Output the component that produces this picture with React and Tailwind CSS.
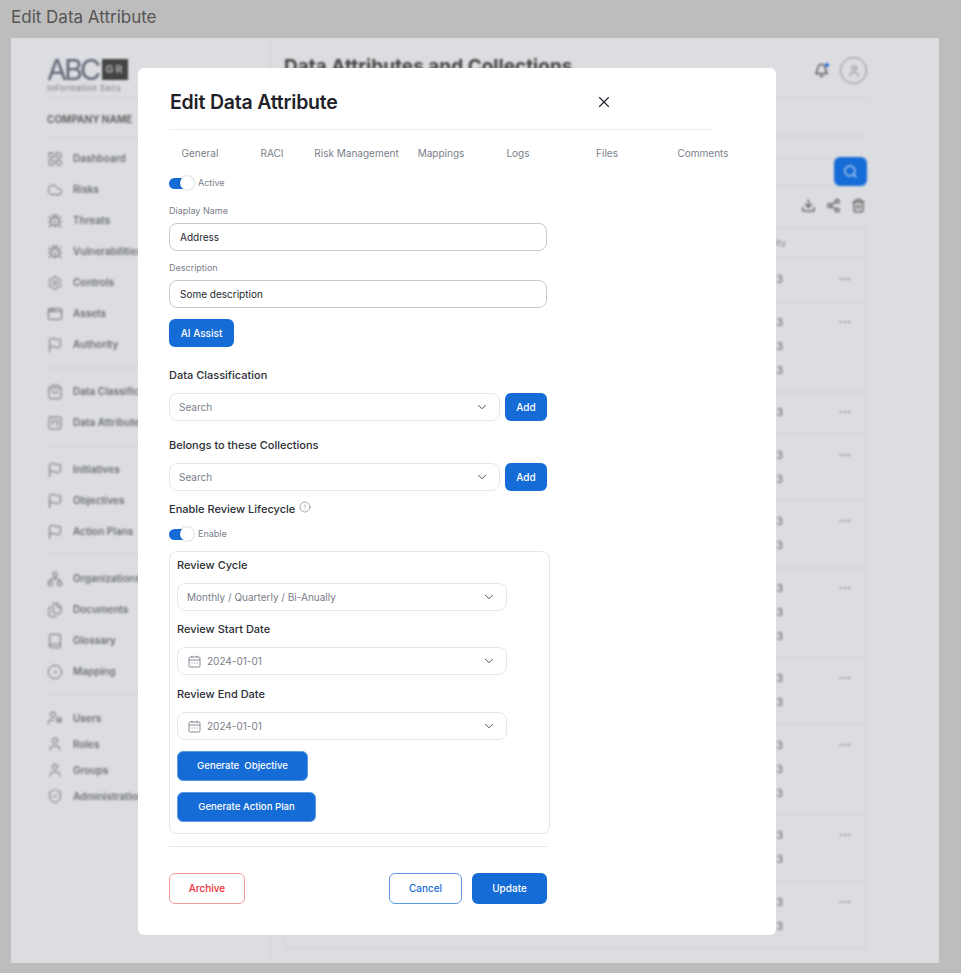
import {
  LayoutGrid, Cloud, Bug, Settings, AppWindow, Flag, ShoppingBag, SquareKanban, Network, Files, Book, CircleDot,
  UserCog, User, ShieldCheck, Bell, Search, Download, Share2, Trash2, Ellipsis,
  X, ChevronDown, CircleAlert,
} from "lucide-react";

const font = { fontFamily: "Inter, sans-serif" };

const navGroups = [
  { items: [["Dashboard", LayoutGrid], ["Risks", Cloud], ["Threats", Bug], ["Vulnerabilities", Bug], ["Controls", Settings], ["Assets", AppWindow], ["Authority", Flag]] },
  { items: [["Data Classification", ShoppingBag], ["Data Attributes", SquareKanban]] },
  { items: [["Initiatives", Flag], ["Objectives", Flag], ["Action Plans", Flag]] },
  { items: [["Organizations", Network], ["Documents", Files], ["Glossary", Book], ["Mapping", CircleDot]] },
];
const adminItems = [["Users", UserCog], ["Roles", User], ["Groups", User], ["Administration", ShieldCheck]];

const tableRows = [1, 3, 1, 2, 2, 3, 2, 3, 2, 2];

const tabs = [
  ["General", "w-[62px]"],
  ["RACI", "w-[82px]"],
  ["Risk Management", "w-[87px]"],
  ["Mappings", "w-[82px]"],
  ["Logs", "w-[72px]"],
  ["Files", "w-[106px]"],
  ["Comments", "w-[86px]"],
];

// Fond floute derriere la modale
const Sidebar = () => (
  <aside className="w-[260px] shrink-0 border-r border-[#d0d1d5] pl-[36px] pr-[10px] overflow-hidden">
    <div className="h-[60px] pt-[17px] border-b border-[#d0d1d5]">
      <div className="flex items-center h-[29px]">
        <span className="text-[29px] leading-none text-[#5f6675] tracking-[-3px]">ABC</span>
        <span className="bg-[#444] text-[#aaa] text-[11px] font-bold px-[3px] h-[21px] leading-[21px] ml-[4px] tracking-[2px]">GR</span>
      </div>
      <div className="text-[8px] leading-[8px] tracking-[0.5px] text-[#777] whitespace-nowrap">InFormation Secu</div>
    </div>
    <div className="h-[40px] border-b border-[#d0d1d5] pt-[4px] flex items-center text-[10px] font-bold text-[#666] whitespace-nowrap">COMPANY NAME</div>
    <div className="pt-[5px]">
      {navGroups.map((group, i) => (
        <div key={i} className="border-b border-[#d0d1d5] pb-[7px] mb-[8px]">
          {group.items.map(([label, Icon]) => (
            <div key={label} className="h-[31px] flex items-center gap-[10px] text-[10px] font-semibold text-[#6b6e76] whitespace-nowrap">
              <Icon size={16} strokeWidth={1.5} />
              {label}
            </div>
          ))}
        </div>
      ))}
      <div className="pt-[2px]">
        {adminItems.map(([label, Icon]) => (
          <div key={label} className="h-[26px] flex items-center gap-[10px] text-[10px] font-semibold text-[#6b6e76] whitespace-nowrap">
            <Icon size={16} strokeWidth={1.5} />
            {label}
          </div>
        ))}
      </div>
    </div>
  </aside>
);

const MainContent = () => (
  <main className="flex-1 pl-[13px] pr-[72px]">
    <div className="h-[60px] border-b border-[#d0d1d5] flex items-center justify-between">
      <h2 className="text-[19px] font-bold text-[#444]">Data Attributes and Collections</h2>
      <div className="flex items-center gap-[11px] pt-[6px]">
        <span className="relative">
          <Bell size={15} className="text-[#444]" />
          <span className="absolute right-0 top-0 w-[4px] h-[4px] rounded-full bg-[#166cd6]" />
        </span>
        <span className="w-[27px] h-[27px] rounded-full border border-[#888] flex items-center justify-center">
          <User size={14} strokeWidth={1.5} className="text-[#777]" />
        </span>
      </div>
    </div>
    <div className="h-[38px] border-b border-[#d0d1d5]" />
    <div className="flex mt-[21px] h-[29px]">
      <div className="flex-1 border-y border-[#d0d1d5]" />
      <div className="w-[33px] bg-[#166cd6] rounded-md flex items-center justify-center text-[#d0dff5]">
        <Search size={15} />
      </div>
    </div>
    <div className="flex justify-end items-center gap-[10px] h-[41px] pr-[1px] pb-[3px]">
      <Download size={15} className="text-[#555]" />
      <Share2 size={15} className="text-[#555]" />
      <Trash2 size={15} className="text-[#555]" />
    </div>
    <div className="border border-[#d0d1d5] rounded-sm">
      <div className="h-[30px] flex items-center">
        <div className="w-[501px] text-right text-[9px] text-[#888]">Sensitivity</div>
      </div>
      {tableRows.map((count, i) => (
        <div key={i} className="flex border-t border-[#d0d1d5] pt-[8px] pb-[9.5px]">
          <div className="w-[498px] text-right text-[11px] leading-[24px] text-[#666]">
            {Array.from({ length: count }, (_, j) => (
              <div key={j}>Level 3</div>
            ))}
          </div>
          <div className="ml-[55px] h-[24px] flex items-center text-[#999]">
            <Ellipsis size={14} />
          </div>
        </div>
      ))}
    </div>
  </main>
);

const Toggle = ({ label }) => (
  <div className="flex items-center h-[14px]">
    <span className="relative w-[25px] h-[11px] block">
      <span className="block h-[11px] w-[18px] rounded-l-full bg-[#166cd6]" />
      <span className="absolute right-0 top-[-2px] w-[14px] h-[14px] rounded-full bg-white shadow-[0_0_2px_rgba(0,0,0,0.35)]" />
    </span>
    <span className="ml-[4px] text-[9px] text-[#7a7e89]">{label}</span>
  </div>
);

const TextField = ({ label, value, className }) => (
  <div className={className}>
    <div className="text-[9px] leading-[14px] text-[#7a7e89]">{label}</div>
    <div className="mt-[5px] h-[28px] border border-[#c6c8ce] rounded-lg pl-[10px] flex items-center text-[10px] text-[#23262d]">{value}</div>
  </div>
);

const SelectBox = ({ className, children }) => (
  <div className={`h-[28px] border border-[#e6e7ea] rounded-lg pl-[9px] pr-[10px] flex items-center justify-between text-[10px] text-[#7a7e89] ${className}`}>
    <span className="flex items-center">{children}</span>
    <ChevronDown size={14} strokeWidth={1.5} className="text-[#333]" />
  </div>
);

const CalendarIcon = () => (
  <svg width="13" height="13" viewBox="0 0 13 13" fill="none" stroke="#7a7e89" strokeWidth="0.9" className="ml-[1px] mr-[6px]">
    <rect x="1" y="2" width="11" height="10" rx="1.2" />
    <path d="M1 5h11M4 .8v2M9 .8v2" />
    <path d="M3.5 8h1M6 8h1M8.5 8h1" />
  </svg>
);

const PrimaryButton = ({ className, children }) => (
  <button className={`h-[30px] bg-[#166cd6] border border-[#5e9ae3] rounded-md text-white text-[9.6px] font-medium flex items-center justify-center whitespace-pre ${className}`}>
    {children}
  </button>
);

const Modal = () => (
  <div className="absolute left-[138px] top-[68px] w-[638px] h-[867px] bg-white rounded-md pl-[31px] overflow-hidden">
    <div className="w-[543px] h-[62px] pt-[8px] border-b border-[#ecedef] flex items-center relative">
      <h1 className="text-[19.5px] font-semibold text-[#1f2329] ml-[1px] tracking-[-0.2px]">Edit Data Attribute</h1>
      <X size={18} strokeWidth={1.5} className="absolute left-[426px] top-[25px] text-[#1f2329]" />
    </div>

    <div className="flex h-[46px] items-center text-[10px] text-[#7a7e89]">
      {tabs.map(([label, width]) => (
        <div key={label} className={`${width} shrink-0 text-center whitespace-nowrap`}>{label}</div>
      ))}
    </div>

    <Toggle label="Active" />

    <div className="w-[378px]">
      <TextField label="Diaplay Name" value="Address" className="mt-[14px]" />
      <TextField label="Description" value="Some description" className="mt-[10px]" />

      <button className="mt-[11px] w-[65px] h-[28px] bg-[#166cd6] rounded-md text-white text-[10px] font-medium">AI Assist</button>

      <div className="mt-[20px] text-[11px] leading-[16px] font-medium text-[#2b2e35]">Data Classification</div>
      <div className="mt-[10px] flex gap-[5px]">
        <SelectBox className="w-[331px]">Search</SelectBox>
        <button className="w-[42px] h-[28px] bg-[#166cd6] rounded-md text-white text-[10px] font-medium">Add</button>
      </div>

      <div className="mt-[16px] text-[11px] leading-[16px] font-medium text-[#2b2e35]">Belongs to these Collections</div>
      <div className="mt-[10px] flex gap-[5px]">
        <SelectBox className="w-[331px]">Search</SelectBox>
        <button className="w-[42px] h-[28px] bg-[#166cd6] rounded-md text-white text-[10px] font-medium">Add</button>
      </div>

      <div className="mt-[10px] flex items-start text-[11px] leading-[16px] font-medium text-[#2b2e35]">
        Enable Review Lifecycle
        <CircleAlert size={12} strokeWidth={1} className="ml-[4px] text-[#555]" />
      </div>
      <div className="mt-[10px]"><Toggle label="Enable" /></div>
    </div>

    <div className="mt-[10px] w-[381px] h-[283px] border border-[#e6e7ea] rounded-lg px-[7px] pt-[5px]">
      <div className="text-[11px] leading-[16px] font-medium text-[#2b2e35]">Review Cycle</div>
      <SelectBox className="mt-[10px] w-[330px]">Monthly / Quarterly / Bi-Anually</SelectBox>
      <div className="mt-[10px] text-[11px] leading-[16px] font-medium text-[#2b2e35]">Review Start Date</div>
      <SelectBox className="mt-[10px] w-[330px]"><CalendarIcon />2024-01-01</SelectBox>
      <div className="mt-[11px] text-[11px] leading-[16px] font-medium text-[#2b2e35]">Review End Date</div>
      <SelectBox className="mt-[10px] w-[330px]"><CalendarIcon />2024-01-01</SelectBox>
      <PrimaryButton className="mt-[11px] w-[131px]">Generate  Objective</PrimaryButton>
      <PrimaryButton className="mt-[11px] w-[139px]">Generate Action Plan</PrimaryButton>
    </div>

    <div className="w-[378px] mt-[12px] border-t border-[#e6e7ea] pt-[26px] flex items-center">
      <button className="w-[76px] h-[31px] border border-[#f39a9f] rounded-md text-[#ee2e36] text-[10px] font-medium">Archive</button>
      <button className="ml-auto w-[73px] h-[31px] border border-[#5e9ae3] rounded-md text-[#166cd6] text-[10px] font-medium">Cancel</button>
      <button className="ml-[10px] w-[75px] h-[31px] bg-[#166cd6] rounded-md text-white text-[10px] font-medium">Update</button>
    </div>
  </div>
);

const App = () => {
  return (
    <div className="relative w-[961px] h-[973px] bg-[#bdbdbd] overflow-hidden" style={font}>
      <div className="h-[38px] pl-[11px] flex items-center pb-[2px] text-[17px] text-[#555]">Edit Data Attribute</div>
      <div className="ml-[11px] w-[928px] h-[925px] bg-[#dcdde0] overflow-hidden">
        <div className="flex h-full blur-[1.2px]">
          <Sidebar />
          <MainContent />
        </div>
      </div>
      <Modal />
    </div>
  );
};

export default App;
